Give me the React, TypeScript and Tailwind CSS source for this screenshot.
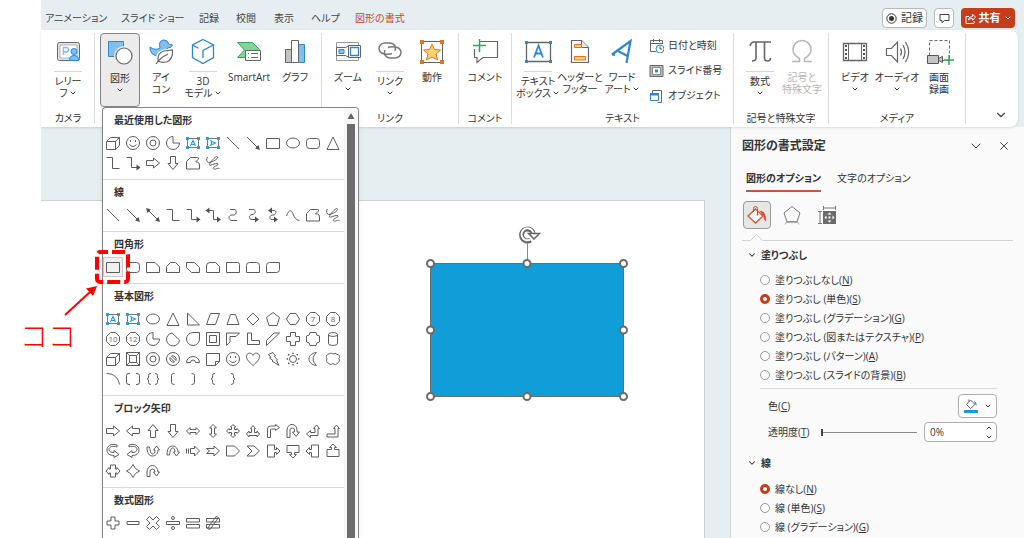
import { useState, type ReactNode } from 'react';
import { ChevronDown, X } from 'lucide-react';
import clsx from 'clsx';

interface ShapeDef {
  label: string;
  d?: string;
  solid?: string;
  text?: string;
  box?: 'horizontal' | 'vertical';
}

const CIRCLE = 'M1.5 8a6.5 6.5 0 1 0 13 0a6.5 6.5 0 1 0-13 0z';
const OCTAGON = 'M5.5 1.5h5l4 4v5l-4 4h-5l-4-4v-5z';

const SHAPES: Record<string, ShapeDef> = {
  cube: { label: '直方体', d: 'M1.5 6.5h9v8h-9zM1.5 6.5l4-4h9v8l-4 4v-8l4-4' },
  smiley: { label: 'スマイル', d: `${CIRCLE}M5.5 5v2M10.5 5v2M4.5 9.5q3.5 4 7 0` },
  donut: { label: '円: 塗りつぶしなし', d: `${CIRCLE}M5 8a3 3 0 1 0 6 0a3 3 0 1 0-6 0z` },
  pie: { label: '部分円', d: 'M8 1.5A6.5 6.5 0 1 0 14.5 8H8z' },
  textBox: { label: 'テキスト ボックス', box: 'horizontal' },
  textBoxV: { label: '縦書きテキスト ボックス', box: 'vertical' },
  line: { label: '線', d: 'M2 2l12 12' },
  lineArrow: { label: '線矢印', d: 'M2 2l11 11', solid: 'M15 15l-5-1.5 3.5-3.5z' },
  lineDouble: { label: '線矢印: 双方向', d: 'M3 3l10 10', solid: 'M15 15l-5-1.5 3.5-3.5zM1 1l5 1.5-3.5 3.5z' },
  rect: { label: '正方形/長方形', d: 'M1.5 3.5h13v10h-13z' },
  oval: { label: '楕円', d: 'M1.5 8a6.5 5 0 1 0 13 0a6.5 5 0 1 0-13 0z' },
  roundRect: { label: '四角形: 角を丸くする', d: 'M4.5 3.5h7a3 3 0 0 1 3 3v4a3 3 0 0 1-3 3h-7a3 3 0 0 1-3-3v-4a3 3 0 0 1 3-3z' },
  triangle: { label: '二等辺三角形', d: 'M8 2l6 12.5H2z' },
  elbow: { label: 'コネクタ: カギ線', d: 'M1.5 2.5h6v11h7' },
  elbowArrow: { label: 'コネクタ: カギ線矢印', d: 'M1.5 2.5h5v10h6', solid: 'M11.5 9.5l4 3-4 3z' },
  elbowDouble: { label: 'コネクタ: カギ線双方向', d: 'M4 3.5h4.5v9h4', solid: 'M12 9.5l4 3-4 3zM4.5.5l-4 3 4 3z' },
  right: { label: '矢印: 右', d: 'M1.5 5.5h7V3l6 5-6 5v-2.5h-7z' },
  left: { label: '矢印: 左', d: 'M14.5 5.5h-7V3l-6 5 6 5v-2.5h7z' },
  up: { label: '矢印: 上', d: 'M5.5 14.5v-7H3l5-6 5 6h-2.5v7z' },
  down: { label: '矢印: 下', d: 'M5.5 1.5v7H3l5 6 5-6h-2.5v-7z' },
  freeform: { label: 'フリーフォーム: 図形', d: 'M1.5 14V6.5l4-4h7q2 0 .5 2L10.5 7h2q2 .5 2 3v4z' },
  scribble: {
    label: 'フリーフォーム: フリーハンド',
    d: 'M2.5 2c-1.5 2-1 5 1 5.500 3 0 7-2 9-4.500.5-1.500-1-2-2.500-.5C7 5 4 9 4.500 10c1 1 5-2 8-1.500 2 1-1 2-3.500 3.500-1.500 1.500-.5 2.500 1.500 2s2.500-1 4-.5',
  },
  curve: { label: 'コネクタ: 曲線', d: 'M5 2.5h4c3 0 3 5 0 5.5H7c-4 0-4 5 0 5.5h5' },
  curveArrow: { label: 'コネクタ: 曲線矢印', d: 'M4 2.5h4c3 0 3 4 0 5H7c-4 1-3 5 0 5h3', solid: 'M10 9.5l4 3-4 3z' },
  curveDouble: { label: 'コネクタ: 曲線双方向', d: 'M7 3.5h2c3 0 2 4 0 4.500H7c-3 1-3 4.500 0 4.500h2', solid: 'M9 9.5l4 3-4 3zM7 .5L3 3.5l4 3z' },
  wave: { label: '曲線', d: 'M1.5 9c2-6 5-7 6.500-2 1.500 4 3 6 6.500 6.500' },
  snip1: { label: '四角形: 1 つの角を切り取る', d: 'M1.5 3.5h8.500l4.500 4.500v5.500h-13z' },
  snip2: { label: '四角形: 上の 2 つの角を切り取る', d: 'M5.5 3.5h5l4 4v6h-13v-6z' },
  snipDiag: { label: '四角形: 対角を切り取る', d: 'M1.5 3.5h8l5 5v5h-8l-5-5z' },
  snipRound: { label: '四角形: 1 つの角を切り取り 1 つの角を丸める', d: 'M5 3.5h5.500l4 4v6h-13v-6.500q0-3.500 3.500-3.500z' },
  round1: { label: '四角形: 1 つの角を丸める', d: 'M1.5 3.5h11q2 0 2 2v8h-13z' },
  round2: { label: '四角形: 上の 2 つの角を丸める', d: 'M4.5 3.5h7q3 0 3 3v7h-13v-7q0-3 3-3z' },
  roundDiag: { label: '四角形: 対角を丸める', d: 'M4.5 3.5h10v7q0 3-3 3h-10v-7q0-3 3-3z' },
  rightTriangle: { label: '直角三角形', d: 'M2.5 2v12h12z' },
  parallelogram: { label: '平行四辺形', d: 'M5.5 2.5h9l-4 11h-9z' },
  trapezoid: { label: '台形', d: 'M5.5 3.5h5l3.500 10H2z' },
  diamond: { label: 'ひし形', d: 'M8 2l6 6-6 6-6-6z' },
  pentagon: { label: '五角形', d: 'M8 1.5l6.500 5-2.500 8H4l-2.500-8z' },
  hexagon: { label: '六角形', d: 'M5 2.5h6l3.500 5.500-3.500 5.500H5L1.5 8z' },
  n7: { label: '七角形', d: OCTAGON, text: '7' },
  n8: { label: '八角形', d: OCTAGON, text: '8' },
  n10: { label: '十角形', d: OCTAGON, text: '10' },
  n12: { label: '十二角形', d: OCTAGON, text: '12' },
  chord: { label: '弦', d: 'M7 2l7.500 7A6.500 6.500 0 1 1 7 2z' },
  tear: { label: '涙形', d: 'M14.5 1.5V8A6.500 6.500 0 1 1 8 1.5z' },
  frame: { label: 'フレーム', d: 'M1.5 1.5h13v13h-13zM4.5 4.5h7v7h-7z' },
  halfFrame: { label: 'フレーム (半分)', d: 'M1.5 2h13l-3.500 3.500H5v5.500L1.5 14.5z' },
  lShape: { label: 'L 字', d: 'M2.5 2h4v7.500h8v4h-12z' },
  stripe: { label: '斜め縞', d: 'M9 2h5.500L1.5 14.5V9.5z' },
  cross: { label: '十字形', d: 'M5.5 1.5h5v4h4v5h-4v4h-5v-4h-4v-5h4z' },
  plaque: { label: 'ブローチ', d: 'M5 1.5h6q0 3.500 3.500 3.500v6q-3.500 0-3.500 3.500H5q0-3.500-3.500-3.500V5q3.500 0 3.500-3.500z' },
  can: { label: '円柱', d: 'M3.5 3.5v9c0 2.500 9 2.500 9 0v-9c0-2.500-9-2.500-9 0zM3.5 3.5c0 2.500 9 2.500 9 0' },
  bevel: { label: '四角形: 角度付き', d: 'M1.5 1.5h13v13h-13zM4.5 4.5h7v7h-7zM1.5 1.5l3 3M14.5 1.5l-3 3M1.5 14.5l3-3M14.5 14.5l-3-3' },
  noSymbol: { label: '禁止マーク', d: `${CIRCLE}M5 6.5l4.500 4.500a3.600 3.600 0 0 1-4.500-4.500zM6.5 5l4.500 4.500a3.600 3.600 0 0 0-4.500-4.500z` },
  arch: { label: 'アーチ', d: 'M1.5 11.5a6.500 6 0 0 1 13 0h-4a2.500 2.500 0 0 0-5 0z' },
  fold: { label: '四角形: メモ', d: 'M1.5 2.5h13v8l-4 4h-9zM10.5 14.5v-4h4' },
  heart: { label: 'ハート', d: 'M8 14.5C4 11 1.5 8.5 1.5 5.5c0-4 5-4.500 6.500-1 1.500-3.500 6.500-3 6.500 1 0 3-2.500 5.500-6.500 9z' },
  bolt: { label: '稲妻', d: 'M3.5 3.5L8 1.5l2.500 3.500-1 .5 3 3.500-1 .5L14 14.5 7 10l1-.5L4.5 7l1.500-.5z' },
  sun: { label: '太陽', d: 'M4.5 8a3.500 3.500 0 1 0 7 0a3.500 3.500 0 1 0-7 0z', solid: 'M7 3l1-2 1 2zM7 13l1 2 1-2zM3 7L1 8l2 1zM13 7l2 1-2 1zM3 5V3h2zM11 3h2v2zM3 11v2h2zM11 13h2v-2z' },
  moon: { label: '月', d: 'M11.5 1.5c-10 1-10 12 0 13-4.500-4-4.500-9 0-13z' },
  cloud: { label: '雲', d: 'M4 3c2-1.500 3-.5 4 0 1-.5 3-1 4 .5 3 0 3 3 2 4 1 2 0 4-1.500 4.500-1 2-3 2-4.500.5-2 1.500-4 1-4.500-.5-2 0-2.500-2.500-1.500-4-1.500-2-.5-5 2-5z' },
  arc: { label: '円弧', d: 'M1.5 2.5c8 0 12 5 13 11' },
  brackets: { label: '大かっこ', d: 'M5 2.5H4q-2.500 0-2.500 2v7q0 2 2.500 2h1M11 2.5h1q2.500 0 2.500 2v7q0 2-2.500 2h-1' },
  braces: { label: '中かっこ', d: 'M6 2.5q-2.500 0-2.500 2V7L2 8l1.500 1v2.500q0 2 2.500 2M10 2.5q2.500 0 2.500 2V7L14 8l-1.500 1v2.500q0 2-2.500 2' },
  bracketL: { label: '左大かっこ', d: 'M9.5 2.5q-3 0-3 2v7q0 2 3 2' },
  bracketR: { label: '右大かっこ', d: 'M6.5 2.5q3 0 3 2v7q0 2-3 2' },
  braceL: { label: '左中かっこ', d: 'M10 2.5q-2.500 0-2.500 2V7L6 8l1.500 1v2.500q0 2 2.500 2' },
  braceR: { label: '右中かっこ', d: 'M6 2.5q2.500 0 2.500 2V7L10 8l-1.500 1v2.500q0 2-2.500 2' },
  leftRight: { label: '矢印: 左右', d: 'M1.5 8L5 4.5v2h6v-2L14.5 8 11 11.5v-2H5v2z' },
  upDown: { label: '矢印: 上下', d: 'M8 1.5L4.5 5h2v6h-2L8 14.5l3.500-3.500h-2V5h2z' },
  quad: { label: '矢印: 四方向', d: 'M8 1.5L10.5 4H9.5v2.500H12v-1L14.5 8 12 10.5v-1H9.5V12h1L8 14.5 5.5 12h1V9.5H4v1L1.5 8 4 5.5v1h2.500V4h-1z' },
  triple: { label: '矢印: 三方向', d: 'M8 2.5l2.500 3h-1v4H12V8l2.500 3-2.500 3v-1.500H4V14l-2.500-3L4 8v1.500h2.500v-4h-1z' },
  bent: { label: '矢印: 折線', d: 'M2.5 14.5V6q0-3 3-3h5V1.5L14.5 4.5l-4 3V6H6.5q-1 0-1 1v7.500z' },
  uturn: { label: '矢印: U ターン', d: 'M2 14.5V7a4.500 5 0 0 1 10 0v2h2.500L11 13.5 7.5 9h2V7q0-2-2.250-2T5 7v7.500z' },
  leftUp: { label: '矢印: 二方向', d: 'M11.5 2l3 3.500H13v7H5.5v2l-4-3.500 4-3.500v2H10v-4H8.5z' },
  bentUp: { label: '矢印: 上向き折線', d: 'M11.5 2l3 3.500H13v8.500H2v-3h8V5.5H8.5z' },
  curvedRight: { label: '矢印: 右カーブ', d: 'M12 2C6 0 2 3 2 7s3 5.500 7 5.500v2l5-3-5-4v2c-3 0-5-1-5-3 0-3 4-4 8-2.500z' },
  curvedLeft: { label: '矢印: 左カーブ', d: 'M4 2c6-2 10 1 10 5s-3 5.500-7 5.500v2l-5-3 5-4v2c3 0 5-1 5-3 0-3-4-4-8-2.500z' },
  curvedUp: { label: '矢印: 上カーブ', d: 'M2 4c0 6 2 9 5.500 9s5.500-3 5.500-6h1.500L11.5 3l-3 4H10c0 3-1 4-2.500 4S5 8 4.5 4z' },
  curvedDown: { label: '矢印: 下カーブ', d: 'M2 12c0-6 2-9 5.500-9S13 6 13 9h1.500l-3 4-3-4H10c0-3-1-4-2.500-4S5 8 4.5 12z' },
  striped: { label: '矢印: ストライプ', d: 'M1.5 5.5v5M3.5 5.5v5M5.5 5.5h4V3l5 5-5 5v-2.500h-4z' },
  notched: { label: '矢印: V 字型', d: 'M1.5 5.5H9V3l5.500 5L9 13v-2.500H1.5l3-2.500z' },
  homePlate: { label: '矢印: 五方向', d: 'M1.5 3h8l5 5-5 5h-8z' },
  chevron: { label: '矢印: 山形', d: 'M2 3h7l5.500 5L9 13H2l5-5z' },
  calloutR: { label: '吹き出し: 右矢印', d: 'M2.5 2h7v4.500h2V4.5l3.500 3.500-3.500 3.500v-2h-2V14h-7z' },
  calloutD: { label: '吹き出し: 下矢印', d: 'M2 2.5v7h4.500v2H4.5l3.500 3.500 3.500-3.500h-2v-2H14v-7z' },
  calloutL: { label: '吹き出し: 左矢印', d: 'M13.5 2h-7v4.500h-2V4.5L1 8l3.500 3.500v-2h2V14h7z' },
  calloutU: { label: '吹き出し: 上矢印', d: 'M2 13.5v-7h4.500v-2H4.5L8 1l3.500 3.500h-2v2H14v7z' },
  calloutLR: { label: '吹き出し: 左右矢印', d: 'M5.5 2h5v4h1.500V4.5L15 8l-3 3.500V10h-1.500v4h-5v-4H4v1.500L1 8l3-3.500V6h1.500z' },
  calloutQuad: { label: '吹き出し: 四方向矢印', d: 'M8 1.5L10.5 5.5 14.5 8l-4 2.500-2.500 4-2.500-4L1.5 8l4-2.500z' },
  circular: { label: '矢印: 環状', d: 'M2 13.5V9a5.500 6.500 0 0 1 11 0h1.500l-3 4-3-4H10q0-3-2.500-3T5 9v4.500z' },
  plus: { label: '加算記号', d: 'M6 2h4v4h4v4h-4v4H6v-4H2V6h4z' },
  minus: { label: '減算記号', d: 'M2 6.5h12v3H2z' },
  times: { label: '乗算記号', d: 'M4.5 1.5L8 5l3.500-3.500 3 3L11 8l3.500 3.500-3 3L8 11l-3.500 3.500-3-3L5 8 1.5 4.5z' },
  divide: { label: '除算記号', d: 'M1.5 6.5h13v3h-13zM6.5 3a1.500 1.500 0 1 0 3 0a1.500 1.500 0 1 0-3 0zM6.5 13a1.500 1.500 0 1 0 3 0a1.500 1.500 0 1 0-3 0z' },
  equal: { label: '次の値と等しい', d: 'M1.5 3.5h13v3.500h-13zM1.5 9.5h13v3.500h-13z' },
  notEqual: { label: '等号否定', d: 'M1.5 3.5h13v3.500h-13zM1.5 9.5h13v3.500h-13zM11 1.5l2.500 1L5 14.5l-2.500-1z' },
};

const SHAPE_GROUPS = [
  {
    title: '最近使用した図形',
    shapes: 'cube smiley donut pie textBox textBoxV line lineArrow rect oval roundRect triangle elbow elbowArrow right down freeform scribble',
  },
  {
    title: '線',
    shapes: 'line lineArrow lineDouble elbow elbowArrow elbowDouble curve curveArrow curveDouble wave freeform scribble',
  },
  { title: '四角形', shapes: 'rect roundRect snip1 snip2 snipDiag snipRound round1 round2 roundDiag' },
  {
    title: '基本図形',
    shapes:
      'textBox textBoxV oval triangle rightTriangle parallelogram trapezoid diamond pentagon hexagon n7 n8 n10 n12 pie chord tear frame halfFrame lShape stripe cross plaque can cube bevel donut noSymbol arch fold smiley heart bolt sun moon cloud arc brackets braces bracketL bracketR braceL braceR',
  },
  {
    title: 'ブロック矢印',
    shapes:
      'right left up down leftRight upDown quad triple bent uturn leftUp bentUp curvedRight curvedLeft curvedUp curvedDown striped notched homePlate chevron calloutR calloutD calloutL calloutU calloutLR calloutQuad circular',
  },
  { title: '数式図形', shapes: 'plus minus times divide equal notEqual' },
];

function ShapeIcon({ shape }: { shape: ShapeDef }) {
  if (shape.box) {
    return (
      <svg width="16" height="16" viewBox="0 0 16 16" fill="none">
        <path d="M2.500 3.500h11v9h-11z" fill="#fff" stroke="#777" />
        <path d="M1 2h3v3H1zM12 2h3v3h-3zM1 11h3v3H1zM12 11h3v3h-3z" fill="#2f9bdc" />
        <path
          d="M5.500 11L8 5.500l2.500 5.500M6.500 9.500h3"
          stroke="#2f9bdc"
          strokeWidth="1.200"
          transform={shape.box === 'vertical' ? 'rotate(90 8 8)' : undefined}
        />
      </svg>
    );
  }

  return (
    <svg width="16" height="16" viewBox="0 0 16 16" fill="none">
      <path d={shape.d} stroke="#5c5c5c" strokeLinejoin="round" />
      {shape.solid ? <path d={shape.solid} fill="#505050" /> : null}
      {shape.text ? (
        <text x="8" y="11" textAnchor="middle" fontSize="8" fill="#666">
          {shape.text}
        </text>
      ) : null}
    </svg>
  );
}

function ShapeGallery() {
  return (
    <div className="absolute left-[61px] top-[107px] bottom-0 z-20 flex w-[257px] overflow-hidden rounded-t border border-b-0 border-[#858585] bg-white shadow-md">
      <div className="min-w-0 flex-1">
        {SHAPE_GROUPS.map((group) => (
          <section key={group.title} className="border-b border-[#d9d9d9] pb-[6px] pt-1">
            <h3 className="pl-[11px] text-[10px] font-bold leading-4 text-[#333]">{group.title}</h3>
            <div className="mt-[5px] grid grid-cols-[repeat(12,20px)]">
              {group.shapes.split(' ').map((key) => (
                <button
                  key={key}
                  type="button"
                  aria-label={SHAPES[key].label}
                  className={clsx(
                    'flex h-5 w-5 items-center justify-center',
                    group.title === '四角形' && key === 'rect' && 'border border-[#c8c8c8] bg-[#f0f0f0]',
                  )}
                >
                  <ShapeIcon shape={SHAPES[key]} />
                </button>
              ))}
            </div>
          </section>
        ))}
      </div>
      <div className="flex w-[14px] flex-col items-center bg-[#f7f7f7] pt-1">
        <svg width="8" height="8" viewBox="0 0 8 8">
          <path d="M4 1l3.500 6h-7z" fill="#666" />
        </svg>
        <div className="mt-1 w-2 flex-1 bg-[#6c6c6c]" />
      </div>
    </div>
  );
}

const GRAY = '#666';
const BLUE = '#2b88d0';
const SKY = '#83beec';

const ICONS = {
  cameo: (
    <>
      <rect x="3.500" y="4.500" width="22" height="18" rx="2" fill="#e4e4e4" stroke={GRAY} />
      <rect x="6" y="7" width="17" height="13" fill="#fff" stroke="#999" strokeWidth=".7" />
      <path d="M9.500 17V9.500h2.500q2.500 0 2.500 2.200T12 14H9.500" stroke={SKY} strokeWidth="1.500" />
      <circle cx="20" cy="13.500" r="3" fill={SKY} stroke={BLUE} />
      <path d="M15.500 22.500q0-5 4.500-5t5 5z" fill={SKY} stroke={BLUE} />
    </>
  ),
  shapes: (
    <>
      <path d="M2.500 2.500h15v15h-15z" fill={SKY} stroke={BLUE} />
      <circle cx="18" cy="17" r="10" fill="#ebebeb" />
      <circle cx="18" cy="17" r="8" fill="#fbfbfb" stroke={GRAY} strokeWidth="1.200" />
    </>
  ),
  icons: (
    <>
      <path
        d="M3 9q5 4 10 1-2-8 4-8 4 0 4.500 4l4 1q-1 3-5 3 0 6-5 8-6 2-10-2-3-3-2.500-7z"
        fill={SKY}
        stroke={BLUE}
      />
      <path d="M10 25q-1-10 7-12l8.500-1q1 11-7 13-4 1-8 0z" fill="#fbfbfb" stroke="#fff" strokeWidth="3" />
      <path d="M11 23q-1-8 6-10l8.500-1q1 9-6 12-5 1-8.500-1zM9 26q4-6 12-10" fill="#fbfbfb" stroke={GRAY} strokeWidth="1.200" />
    </>
  ),
  model: (
    <path
      d="M14 1.500L24.500 7v12.500L14 25.500 3.500 19.500V7zM3.500 7l6 3.200M24.500 7L14 12.500v7.500"
      fill="#fff"
      stroke={BLUE}
      strokeWidth="1.300"
    />
  ),
  smartart: (
    <>
      <path d="M2.500 4.500h15l7 7-7 8h-15l7-7.500z" fill="#85d39a" stroke="#35a457" />
      <path d="M10.500 12.500h15v10h-15z" fill="#fff" stroke={GRAY} />
      <path d="M13 15.500h1M16 15.500h7M13 19.500h1M16 19.500h7" stroke={GRAY} />
    </>
  ),
  chart: (
    <>
      <path d="M4.500 11.500h6v13h-6z" fill="#c6c4c2" stroke={GRAY} />
      <path d="M17.500 6.500h6v18h-6z" fill={SKY} stroke={BLUE} />
      <path d="M10.500 2.500h7v22h-7z" fill="#fff" stroke={GRAY} />
    </>
  ),
  zoom: (
    <>
      <path d="M2.500 4.500h22v18h-22z" fill="#f7f7f7" stroke="#999" />
      <path d="M2.500 9.500h9l4-2v12l-4-2h-9z" fill="#fff" stroke={GRAY} />
      <path d="M5 11.500h5v4H5z" fill={SKY} stroke={BLUE} />
      <path d="M14.500 7.500h12v12h-12z" fill="#fff" stroke={GRAY} />
      <path d="M16.500 9.500h8v8h-8z" fill="#fff" stroke={BLUE} strokeWidth="1.300" />
    </>
  ),
  link: (
    <g stroke="#777" strokeWidth="1.500">
      <path d="M16 15.500q-2 1-7 .5A6 5.500 0 1 1 9 5h5a6 5.500 0 0 1 5 8" />
      <path d="M12 9.500q2-1 7-.5a6 5.500 0 1 1 0 11h-5a6 5.500 0 0 1-5-8" />
    </g>
  ),
  action: (
    <>
      <path d="M3.500 3.500h21v21h-21z" fill="#fff" stroke="#666" />
      <path d="M2 2h4v4H2zM22 2h4v4h-4zM2 22h4v4H2zM22 22h4v4h-4z" fill="#e4731c" />
      <path d="M14 6l2.500 5.500 6 .5-4.500 4 1.500 6-5.500-3-5.500 3 1.500-6-4.500-4 6-.5z" fill="#f9d27a" stroke="#e4731c" />
    </>
  ),
  comment: (
    <>
      <path d="M9 3.500h17.500v16H12l-6 5v-5H3.500V11" fill="#fff" stroke={GRAY} strokeWidth="1.200" />
      <path d="M8.500 1v13M2 7.500h13" stroke="#35a457" strokeWidth="1.500" />
    </>
  ),
  textbox: (
    <>
      <path d="M2.500 4.500h24v19h-24z" fill="#fff" stroke={GRAY} strokeWidth="1.300" />
      <path d="M1 3h3v3H1zM25 3h3v3h-3zM1 22h3v3H1zM25 22h3v3h-3z" fill={BLUE} />
      <path d="M10 19.500l4.500-12 4.500 12M11.500 15.500h6" stroke={BLUE} strokeWidth="1.800" />
    </>
  ),
  header: (
    <>
      <path d="M5.500 2.500h10l7 7v15h-17z" fill="#fff" stroke={GRAY} strokeWidth="1.200" />
      <path d="M15.500 2.500v7h7" fill="#eee" stroke={GRAY} />
      <path d="M8.500 6.500h7v3h-7zM8.500 18.500h11v3.500h-11z" fill="#f9d27a" stroke="#e4731c" />
    </>
  ),
  wordart: <path d="M4 16.500L22.500 3l-4 22M4 16.500l3 .5M10 13l9.500 5" stroke={BLUE} strokeWidth="2.200" />,
  pi: <path d="M4 8q1-4 4-4h17M10 4v16q0 3-4 3M18.500 4v16q0 3 3 3t3-3" stroke={GRAY} strokeWidth="1.600" />,
  omega: (
    <path d="M4 23.500h7.500v-3C7 18 5 15 5 11.500a9 9 0 0 1 18 0c0 3.500-2 6.500-6.500 9v3H24" stroke="#b5b5b5" strokeWidth="1.500" />
  ),
  video: (
    <>
      <path d="M2.500 5.500h23v17h-23z" fill="#fff" stroke={GRAY} strokeWidth="1.300" />
      <path d="M7.500 5.500v17M20.500 5.500v17" stroke={GRAY} />
      <path d="M5 7v15M23 7v15" stroke="#444" strokeWidth="1.800" strokeDasharray="2 2" />
    </>
  ),
  audio: (
    <>
      <path d="M3.500 10.500h5l6-6.500v20l-6-6.500h-5z" fill="#fff" stroke={GRAY} strokeWidth="1.200" />
      <path d="M17.500 10.500q2 3.500 0 7M20 7q4 7 0 14M22.500 4q6.500 10 0 20" stroke={GRAY} strokeWidth="1.200" />
    </>
  ),
  screen: (
    <>
      <path d="M4.500 2.500h20v20h-20z" fill="#fafafa" stroke={GRAY} strokeDasharray="3 2" />
      <path d="M2.500 17.500h11v8h-11zM13.500 20.500l4-2v6l-4-2z" fill="#c6c4c2" stroke="#555" />
      <path d="M24 17v10M19 22h10" stroke="#35a457" strokeWidth="1.500" />
    </>
  ),
};

interface RibbonButtonProps {
  icon: keyof typeof ICONS;
  lines: string[];
  menu?: 'inline' | 'below';
  split?: boolean;
  active?: boolean;
  disabled?: boolean;
  wide?: boolean;
}

function Caret() {
  return <ChevronDown className="inline-block h-2 w-2" strokeWidth={3} />;
}

function RibbonButton({ icon, lines, menu, split, active, disabled, wide }: RibbonButtonProps) {
  return (
    <button
      type="button"
      disabled={disabled}
      className={clsx(
        'flex h-[74px] shrink-0 flex-col items-center whitespace-nowrap pt-[5px] text-[10px] leading-3',
        wide ? 'w-[50px]' : active ? 'w-10' : 'w-[42px]',
        active && 'rounded border border-[#858585] bg-[#ebebeb]',
        disabled ? 'text-[#b5b5b5]' : 'text-[#333]',
      )}
    >
      <svg width="28" height="28" viewBox="0 0 28 28" fill="none" className="shrink-0 overflow-visible">
        {ICONS[icon]}
      </svg>
      <span className="mt-[5px] flex flex-col items-center">
        {split ? <span className="mb-[3px] h-px w-7 bg-[#d4d4d4]" /> : null}
        {lines.map((line, i) => (
          <span key={line} className="flex items-center gap-px">
            {line}
            {menu === 'inline' && i === lines.length - 1 ? <Caret /> : null}
          </span>
        ))}
        {menu === 'below' ? (
          <span className="flex h-3 items-center">
            <Caret />
          </span>
        ) : null}
      </span>
    </button>
  );
}

function RibbonGroup({ label, children }: { label?: string; children: ReactNode }) {
  return (
    <div className="flex shrink-0 flex-col justify-between border-r border-[#dcdcdc] px-[5px]">
      <div className="flex">{children}</div>
      <div className="h-3 text-center text-[10px] leading-3 text-[#333]">{label}</div>
    </div>
  );
}

const TEXT_COMMANDS = [
  {
    label: '日付と時刻',
    icon: (
      <>
        <path d="M7 13.500H1.500v-11h12V6M1.500 5.500h12M4.500 1v3M10.500 1v3" stroke={GRAY} />
        <circle cx="11" cy="11" r="4" fill="#fff" stroke={BLUE} />
        <path d="M11 8.500V11h2" stroke="#444" />
      </>
    ),
  },
  {
    label: 'スライド番号',
    icon: (
      <>
        <path d="M1 2.500h13v11H1z" fill="#bbb" stroke={GRAY} />
        <path d="M3.500 4.500h8v7h-8z" fill="#fff" stroke="#888" />
        <path d="M6 6.500h3v3H6z" fill={BLUE} />
      </>
    ),
  },
  {
    label: 'オブジェクト',
    icon: (
      <>
        <path d="M3.500 5V2.500h9v12h-4" stroke={GRAY} />
        <path d="M1.500 5.500h8v7h-8z" fill="#fff" stroke={BLUE} />
        <path d="M1 5h9v2.500H1z" fill={BLUE} />
      </>
    ),
  },
];

const MENU_TABS = [
  { label: 'アニメーション', width: 'w-[76px]' },
  { label: 'スライド ショー', width: 'w-[78px]' },
  { label: '記録', width: 'w-[37px]' },
  { label: '校閲', width: 'w-[38px]' },
  { label: '表示', width: 'w-[37px]' },
  { label: 'ヘルプ', width: 'w-[44px]' },
];

function TitleBar() {
  return (
    <header className="flex h-[30px] shrink-0 items-center pt-[6px]">
      <nav className="flex pl-1 text-[10px] leading-4 text-[#444]">
        {MENU_TABS.map((tab) => (
          <button key={tab.label} type="button" className={clsx('shrink-0 whitespace-nowrap text-left', tab.width)}>
            {tab.label}
          </button>
        ))}
        <button type="button" className="whitespace-nowrap text-[#c04a2c]">
          図形の書式
        </button>
      </nav>
      <div className="ml-auto flex gap-[7px] pr-[9px] text-[11px] leading-4 text-[#333]">
        <button type="button" className="flex h-5 w-[45px] items-center justify-center gap-1 rounded border border-[#b8b8b8] bg-white">
          <svg width="11" height="11" viewBox="0 0 11 11" fill="none">
            <circle cx="5.500" cy="5.500" r="4.700" stroke="#333" />
            <circle cx="5.500" cy="5.500" r="2.500" fill="#333" />
          </svg>
          記録
        </button>
        <button type="button" aria-label="コメント" className="flex h-5 w-5 items-center justify-center rounded border border-[#b8b8b8] bg-white">
          <svg width="11" height="11" viewBox="0 0 11 11" fill="none">
            <path d="M1 1.500h9v6H5.500L3 9.800V7.500H1z" stroke="#444" />
          </svg>
        </button>
        <button type="button" className="flex h-5 w-[54px] items-center justify-center gap-[3px] rounded bg-[#c43e1c] font-bold text-white">
          <svg width="11" height="11" viewBox="0 0 11 11" fill="none">
            <path d="M4 3.500H1v7h8V8M3.500 7q0-3.500 4-3.500V1.200l3 3-3 3V5.500Q5 5 3.500 7z" stroke="#fff" />
          </svg>
          共有
          <Caret />
        </button>
      </div>
    </header>
  );
}

function Ribbon() {
  return (
    <div className="relative z-10 mr-[6px] flex h-[97px] shrink-0 rounded-r-lg bg-white py-[3px] pl-px shadow">
      <RibbonGroup label="カメラ">
        <RibbonButton icon="cameo" lines={['レリー', 'フ']} menu="inline" split />
      </RibbonGroup>
      <RibbonGroup label="図">
        <RibbonButton icon="shapes" lines={['図形']} menu="below" active />
        <RibbonButton icon="icons" lines={['アイ', 'コン']} />
        <RibbonButton icon="model" lines={['3D', 'モデル']} menu="inline" split />
        <RibbonButton icon="smartart" lines={['SmartArt']} wide />
        <RibbonButton icon="chart" lines={['グラフ']} />
      </RibbonGroup>
      <RibbonGroup label="リンク">
        <RibbonButton icon="zoom" lines={['ズーム']} menu="below" />
        <RibbonButton icon="link" lines={['リンク']} menu="below" split />
        <RibbonButton icon="action" lines={['動作']} />
      </RibbonGroup>
      <RibbonGroup label="コメント">
        <RibbonButton icon="comment" lines={['コメント']} />
      </RibbonGroup>
      <RibbonGroup label="テキスト">
        <RibbonButton icon="textbox" lines={['テキスト', 'ボックス']} menu="inline" split />
        <RibbonButton icon="header" lines={['ヘッダーと', 'フッター']} />
        <RibbonButton icon="wordart" lines={['ワード', 'アート']} menu="inline" />
        <div className="flex w-[85px] flex-col pl-[6px]">
          {TEXT_COMMANDS.map((command) => (
            <button
              key={command.label}
              type="button"
              className="flex h-[25px] items-center gap-1 whitespace-nowrap text-[10px] text-[#333]"
            >
              <svg width="15" height="15" viewBox="0 0 15 15" fill="none" className="shrink-0">
                {command.icon}
              </svg>
              {command.label}
            </button>
          ))}
        </div>
      </RibbonGroup>
      <RibbonGroup label="記号と特殊文字">
        <RibbonButton icon="pi" lines={['数式']} menu="below" split />
        <RibbonButton icon="omega" lines={['記号と', '特殊文字']} disabled />
      </RibbonGroup>
      <RibbonGroup label="メディア">
        <RibbonButton icon="video" lines={['ビデオ']} menu="below" />
        <RibbonButton icon="audio" lines={['オーディオ']} menu="below" />
        <RibbonButton icon="screen" lines={['画面', '録画']} />
      </RibbonGroup>
      <div className="flex flex-1 items-end justify-end pb-[2px] pr-[10px]">
        <button type="button" aria-label="リボンの表示オプション">
          <ChevronDown className="h-[14px] w-[14px] text-[#444]" />
        </button>
      </div>
    </div>
  );
}

const HANDLES = [
  '-left-[5px] -top-[5px]',
  'left-1/2 -top-[5px] -translate-x-1/2',
  '-right-[5px] -top-[5px]',
  '-left-[5px] top-1/2 -translate-y-1/2',
  '-right-[5px] top-1/2 -translate-y-1/2',
  '-left-[5px] -bottom-[5px]',
  'left-1/2 -bottom-[5px] -translate-x-1/2',
  '-right-[5px] -bottom-[5px]',
];

function SlideCanvas() {
  return (
    <main className="flex min-w-0 flex-1 pr-[25px] pt-[73px]">
      <div className="relative flex-1 border-r border-t border-[#cdd1d3] bg-white">
        <div className="absolute left-[389px] top-[62px] h-[134px] w-[194px] border border-[#6b6b6b] bg-[#119dd7]">
          <div className="absolute -top-[22px] left-1/2 h-[22px] w-px bg-[#8a8a8a]" />
          <svg width="28" height="20" viewBox="0 0 28 20" fill="none" className="absolute -top-[39px] left-1/2 -translate-x-1/2">
            <path d="M17.500 15.200A6 6 0 1 1 20.500 10" stroke="#666" strokeWidth="5" />
            <path d="M17.200 14.700A6 6 0 1 1 20.500 10" stroke="#fff" strokeWidth="2" />
            <path d="M15.500 8.500h11l-5.500 5.500z" fill="#fff" stroke="#666" strokeWidth="1.500" />
          </svg>
          {HANDLES.map((position) => (
            <span key={position} className={clsx('absolute h-[9px] w-[9px] rounded-full border-2 border-[#6b6b6b] bg-white', position)} />
          ))}
        </div>
      </div>
    </main>
  );
}

interface RadioOption {
  label: string;
  accessKey: string;
}

const FILL_OPTIONS: RadioOption[] = [
  { label: '塗りつぶしなし', accessKey: 'N' },
  { label: '塗りつぶし (単色)', accessKey: 'S' },
  { label: '塗りつぶし (グラデーション)', accessKey: 'G' },
  { label: '塗りつぶし (図またはテクスチャ)', accessKey: 'P' },
  { label: '塗りつぶし (パターン)', accessKey: 'A' },
  { label: '塗りつぶし (スライドの背景)', accessKey: 'B' },
];

const LINE_OPTIONS: RadioOption[] = [
  { label: '線なし', accessKey: 'N' },
  { label: '線 (単色)', accessKey: 'S' },
  { label: '線 (グラデーション)', accessKey: 'G' },
];

interface RadioListProps {
  name: string;
  options: RadioOption[];
  value: string;
  onChange: (value: string) => void;
}

function RadioList({ name, options, value, onChange }: RadioListProps) {
  return (
    <div className="pl-[29px]">
      {options.map((option) => (
        <label key={option.accessKey} className="flex h-[19px] items-center gap-[5px] whitespace-nowrap">
          <input
            type="radio"
            name={name}
            checked={value === option.accessKey}
            onChange={() => onChange(option.accessKey)}
            className="h-[10px] w-[10px] shrink-0 appearance-none rounded-full border border-[#9a9a9a] bg-white checked:border-[3px] checked:border-[#c43e1c]"
          />
          <span>
            {option.label}(<u>{option.accessKey}</u>)
          </span>
        </label>
      ))}
    </div>
  );
}

function SectionHeading({ children }: { children: ReactNode }) {
  return (
    <button type="button" className="flex h-5 items-center gap-1 pl-4 font-bold">
      <ChevronDown className="h-[10px] w-[10px]" strokeWidth={2.5} />
      {children}
    </button>
  );
}

function FormatPane() {
  const [fill, setFill] = useState('S');
  const [line, setLine] = useState('N');
  const [transparency, setTransparency] = useState(0);

  return (
    <aside className="w-[294px] shrink-0 overflow-hidden border-l border-[#d5d5d5] bg-[#fafafa] text-[10px] leading-4 text-[#333]">
      <div className="flex items-center pl-[11px] pr-[13px] pt-[9px]">
        <h2 className="flex-1 text-[12px] font-bold leading-5">図形の書式設定</h2>
        <button type="button" aria-label="作業ウィンドウのオプション" className="mr-[13px]">
          <ChevronDown className="h-4 w-4" strokeWidth={1.5} />
        </button>
        <button type="button" aria-label="閉じる">
          <X className="h-[14px] w-[14px]" strokeWidth={1.5} />
        </button>
      </div>
      <div className="mt-[14px] flex gap-[16px] pl-[15px]">
        <button type="button" className="border-b-2 border-[#c9553f] pb-[4px] font-bold">
          図形のオプション
        </button>
        <button type="button" className="pb-[6px]">
          文字のオプション
        </button>
      </div>
      <div className="mt-[9px] flex items-center gap-[7px] pl-[12px]">
        <button type="button" aria-label="塗りつぶしと線" className="flex h-7 w-7 items-center justify-center rounded border border-[#9a9a9a] bg-[#e6e6e6]">
          <svg width="22" height="22" viewBox="0 0 22 22" fill="none">
            <path d="M9.500 5L17 12l-7.500 7L2 12z" fill="#fff" stroke="#d4502c" strokeWidth="1.300" />
            <path d="M7.500 8V4.500a2 2 0 0 1 4 0V10" stroke="#d4502c" />
            <path d="M13.500 6.500q7 .5 6.500 11-2-1-2.500-5z" fill="#d4502c" />
            <circle cx="11.500" cy="10.500" r="1" fill="#d4502c" />
          </svg>
        </button>
        <button type="button" aria-label="効果" className="flex h-7 w-7 items-center justify-center">
          <svg width="20" height="20" viewBox="0 0 20 20" fill="none">
            <path d="M10 1.500l8 6.500-3 8.500H5L2 8z" fill="#fff" stroke="#777" />
            <path d="M5 16.500l-2 3M15 16.500l2 3" stroke="#aaa" />
            <path d="M4.500 17h11" stroke="#999" strokeWidth="1.500" />
          </svg>
        </button>
        <button type="button" aria-label="サイズとプロパティ" className="flex h-7 w-7 items-center justify-center">
          <svg width="20" height="20" viewBox="0 0 20 20" fill="none">
            <path d="M6.500 1v4M18.500 1v4M6.500 3h12M1 6.500h4M1 18.500h4M3 6.500v12" stroke="#777" />
            <path d="M6 6h13v13H6z" fill="#6b6b6b" />
            <path d="M12.500 7.500l2 2h-4zM12.500 17.500l2-2h-4zM7.500 12.500l2-2v4zM17.500 12.500l-2-2v4zM11.500 11.500h2v2h-2z" fill="#fff" />
          </svg>
        </button>
      </div>
      <svg width="271" height="8" viewBox="0 0 271 8" fill="none" className="ml-[11px] mt-1">
        <path d="M0 7.500h8.500l6-6 6 6H271" stroke="#d2d2d2" />
      </svg>

      <section className="pt-1">
        <SectionHeading>塗りつぶし</SectionHeading>
        <div className="pt-[5px]">
          <RadioList name="fill" options={FILL_OPTIONS} value={fill} onChange={setFill} />
        </div>
        <div className="ml-[29px] mr-[27px] mt-1 border-t border-[#d9d9d9] pl-2">
          <div className="mt-[5px] flex items-center justify-between">
            <span>
              色(<u>C</u>)
            </span>
            <button type="button" aria-label="塗りつぶしの色" className="flex h-6 w-[39px] items-center justify-center gap-[6px] rounded border border-[#adadad] bg-white">
              <svg width="14" height="14" viewBox="0 0 14 14" fill="none">
                <path d="M6.500 1L11 5.500 6.500 9.500l-4-4zM5 3V.5" fill="#fff" stroke="#666" />
                <path d="M10 2q3 1 2.500 5Q11 6 10 2z" fill={BLUE} />
                <path d="M0 11h14v3H0z" fill="#119dd7" />
              </svg>
              <Caret />
            </button>
          </div>
          <div className="mt-1 flex items-center">
            <label htmlFor="transparency" className="whitespace-nowrap">
              透明度(<u>T</u>)
            </label>
            <input
              id="transparency"
              type="range"
              min={0}
              max={100}
              value={transparency}
              onChange={(event) => setTransparency(Number(event.target.value))}
              className="ml-[12px] mr-[7px] h-2 min-w-0 flex-1 appearance-none bg-transparent [&::-webkit-slider-runnable-track]:h-px [&::-webkit-slider-runnable-track]:bg-[#8a8a8a] [&::-webkit-slider-thumb]:-mt-[3px] [&::-webkit-slider-thumb]:h-[7px] [&::-webkit-slider-thumb]:w-[2px] [&::-webkit-slider-thumb]:appearance-none [&::-webkit-slider-thumb]:bg-[#444]"
            />
            <div className="flex h-5 w-[73px] items-center rounded border border-[#adadad] bg-white pl-[5px] pr-[3px]">
              <input
                type="text"
                aria-label="透明度の値"
                value={`${transparency}%`}
                onChange={(event) => setTransparency(Math.min(100, parseInt(event.target.value, 10) || 0))}
                className="min-w-0 flex-1 bg-transparent outline-none"
              />
              <div className="flex flex-col">
                <button
                  type="button"
                  aria-label="増やす"
                  className="flex h-[9px] items-center"
                  onClick={() => setTransparency(Math.min(100, transparency + 1))}
                >
                  <ChevronDown className="h-2 w-2 rotate-180" strokeWidth={3} />
                </button>
                <button
                  type="button"
                  aria-label="減らす"
                  className="flex h-[9px] items-center"
                  onClick={() => setTransparency(Math.max(0, transparency - 1))}
                >
                  <ChevronDown className="h-2 w-2" strokeWidth={3} />
                </button>
              </div>
            </div>
          </div>
        </div>
      </section>

      <section className="pt-[11px]">
        <SectionHeading>線</SectionHeading>
        <div className="pt-[6px]">
          <RadioList name="line" options={LINE_OPTIONS} value={line} onChange={setLine} />
        </div>
      </section>
    </aside>
  );
}

function Callout() {
  return (
    <div className="pointer-events-none absolute left-0 top-[248px] z-30">
      <svg width="132" height="72" viewBox="0 0 132 72" fill="none">
        <rect x="97" y="4" width="31" height="30" rx="3" stroke="#f00" strokeWidth="4" strokeDasharray="13 4" strokeDashoffset="5" />
        <path d="M65 67l25-23" stroke="#f00" strokeWidth="2" />
        <path d="M97 38l-4 10-7-7.500z" fill="#f00" />
      </svg>
      <p className="pl-5 text-[28px] font-light leading-8 text-[#f00] [font-feature-settings:normal]">ココ</p>
    </div>
  );
}

export default function App() {
  return (
    <div className="relative h-screen overflow-hidden bg-white pl-[41px] font-['Open_Sans','Noto_Sans_CJK_JP',sans-serif] [font-feature-settings:'palt']">
      <div className="relative flex h-full flex-col bg-[#e6eef1]">
        <TitleBar />
        <Ribbon />
        <div className="flex min-h-0 flex-1">
          <SlideCanvas />
          <FormatPane />
        </div>
        <ShapeGallery />
      </div>
      <Callout />
    </div>
  );
}
